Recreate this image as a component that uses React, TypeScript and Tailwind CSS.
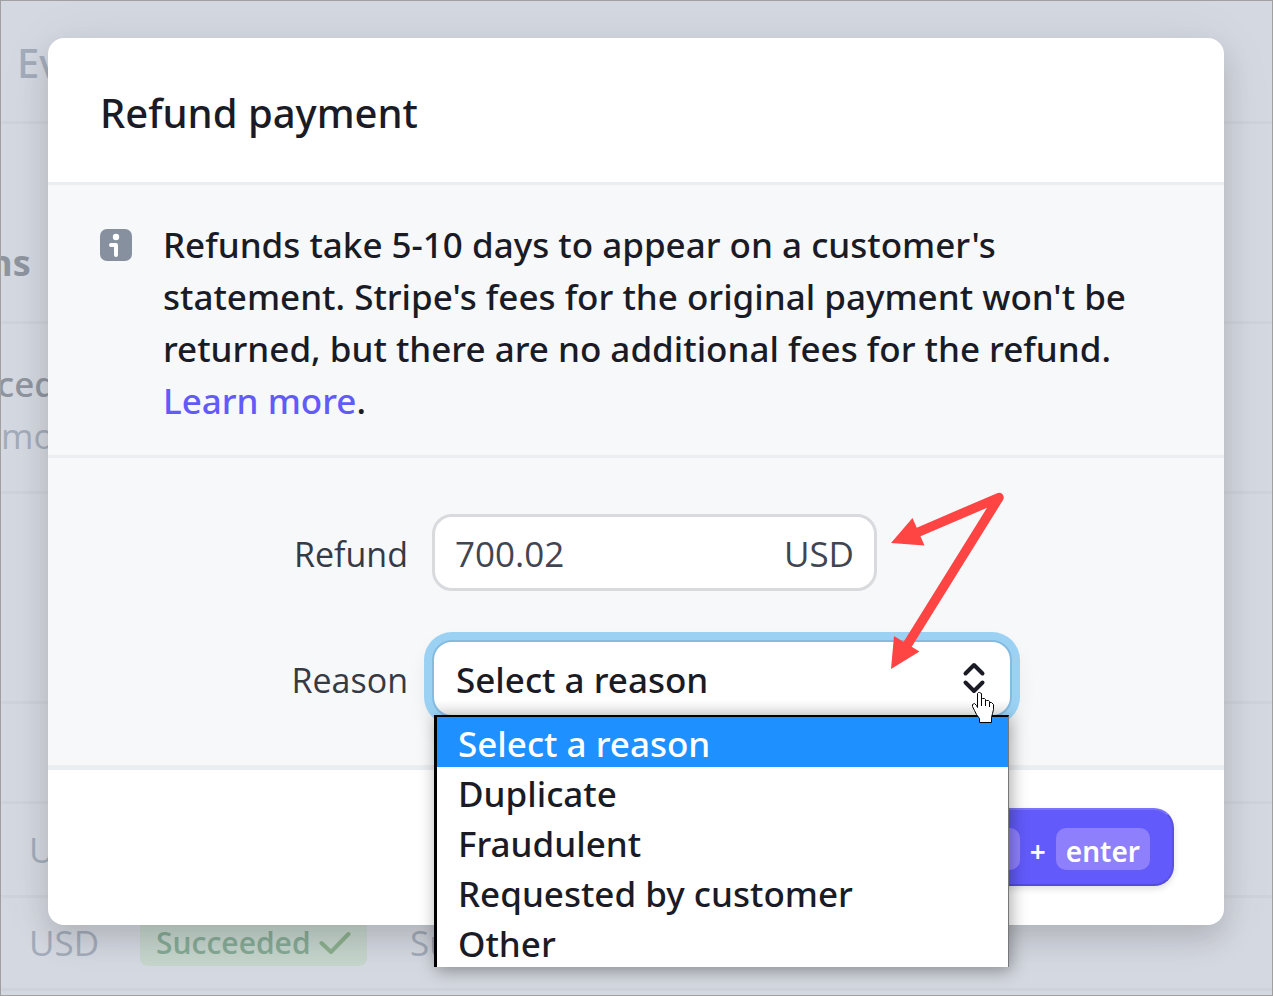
import { useState } from "react";

const reasons = [
  "Select a reason",
  "Duplicate",
  "Fraudulent",
  "Requested by customer",
  "Other",
];

function PageBehind() {
  return (
    <div aria-hidden="true" className="flex flex-col text-[35px] leading-[52px] text-[#a3acba]">
      <div className="flex h-[123px] items-center border-b-[3px] border-[#ced2db] pt-1 pl-4 font-['Noto_Sans',sans-serif] text-[40px] font-medium">
        Ev
      </div>
      <div className="flex h-[200px] items-end border-b-[3px] border-[#ced2db] pb-8 text-[36px] font-bold text-[#8f959f]">
        <span className="-ml-3">ns</span>
      </div>
      <div className="flex h-[170px] flex-col justify-center border-b-[3px] border-[#ced2db] pt-1">
        <span className="-ml-1 font-['Noto_Sans',sans-serif] font-medium text-[#8f959f]">ced</span>
        <span>mo</span>
      </div>
      <div className="h-[210px] border-b-[3px] border-[#ced2db]" />
      <div className="h-[100px] border-b-[3px] border-[#ced2db]" />
      <div className="flex h-[94px] items-center border-b-[3px] border-[#ced2db] pl-7">USD</div>
      <div className="flex h-[93px] items-center border-b-[3px] border-[#ced2db] pl-7">
        <span className="w-[111px]">USD</span>
        <span className="flex h-[46px] w-[227px] items-center gap-2 rounded-lg bg-[#c5d5cc] pl-4 text-[30px] font-semibold text-[#86ab96]">
          Succeeded
          <svg className="h-6 w-8" viewBox="0 0 32 24" fill="none" stroke="#8db08f" strokeWidth="4" strokeLinecap="round" strokeLinejoin="round">
            <path d="M2.5 12 L12 21 L29.500 3" />
          </svg>
        </span>
        <span className="pl-[43px]">Su</span>
      </div>
    </div>
  );
}

function InfoIcon() {
  return (
    <svg className="mt-[10px] h-8 w-8 shrink-0" viewBox="0 0 32 32" aria-hidden="true">
      <rect width="32" height="32" rx="7" fill="#87909f" />
      <circle cx="16" cy="8" r="3.200" fill="#fff" />
      <path d="M11 16 H16 V26" fill="none" stroke="#fff" strokeWidth="4" strokeLinecap="round" strokeLinejoin="round" />
    </svg>
  );
}

function Arrows() {
  return (
    <svg className="pointer-events-none absolute top-[31px] left-[840px] h-[184px] w-[120px]" viewBox="888 489 120 184" aria-hidden="true">
      <path d="M914 534 L999 497.500 L906 647" fill="none" stroke="#ff4444" strokeWidth="9.500" strokeLinecap="round" strokeLinejoin="round" />
      <path d="M891 543 L912.500 518 L924.500 545.500 Z M891 669 L894 636 L919.500 651.500 Z" fill="#ff4444" />
    </svg>
  );
}

function HandPointer() {
  return (
    <svg className="pointer-events-none absolute top-[51px] right-[17px] z-20 h-8 w-6" viewBox="971 691 24 32" aria-hidden="true">
      <path
        d="M979.500 722.500 V718.500 L976.500 714.500 L974.500 710.500 L972.500 706.500 V704.500 L974.500 703.500 L976.500 705.500 L977.500 707.500 V693.500 L978.500 692.500 H979.500 L981.500 693.500 V699 L982.500 698.500 H984.500 L985.500 699.500 V701 L986.500 700.500 H988.500 L989.500 701.500 V702.500 L991.500 702.500 L993.500 704.500 V709.500 L992.500 713.500 L991.500 717.500 V722.500 Z"
        fill="#fff"
        stroke="#000"
        strokeWidth="1"
        strokeLinejoin="round"
      />
      <path d="M981.500 699 V706 M985.500 700 V706 M989.500 702 V707" stroke="#000" strokeWidth="1" />
    </svg>
  );
}

export default function App() {
  const [reason, setReason] = useState(reasons[0]);
  const [amount, setAmount] = useState("700.02");

  return (
    <main className="relative min-h-screen overflow-hidden border border-[#a0a0a0] bg-[#d4d8e0] font-['Open_Sans','Noto_Sans',sans-serif] text-[#1a1b25]">
      <PageBehind />
      <div className="absolute inset-0 pt-[37px] pr-12 pl-[47px]">
        <section
          role="dialog"
          aria-labelledby="refund-title"
          className="rounded-2xl bg-white shadow-[0_14px_28px_rgba(0,0,0,0.14),0_4px_60px_rgba(48,49,61,0.06)]"
        >
          <header className="flex h-[147px] items-center border-b-[3px] border-[#ebeef1] px-[52px] pt-[6px]">
            <h1 id="refund-title" className="font-['Noto_Sans',sans-serif] text-[40px] font-medium">Refund payment</h1>
          </header>

          <div className="flex gap-[31px] border-b-[3px] border-[#ebedf0] bg-[#f6f8fa] px-[52px] pt-[34px] pb-7">
            <InfoIcon />
            <p className="max-w-[980px] font-['Noto_Sans',sans-serif] text-[35px] leading-[52px] font-medium">
              Refunds take 5-10 days to appear on a customer's statement. Stripe's fees for the original payment won't be
              returned, but there are no additional fees for the refund.{" "}
              <a href="#learn-more" className="text-[#625afa]">Learn more</a>.
            </p>
          </div>

          <form className="relative flex flex-col gap-[49px] border-b-[5px] border-[#ebeef1] bg-[#f6f8fa] pt-14 pb-12">
            <div className="flex items-center gap-6">
              <label htmlFor="amount" className="w-[360px] pt-1 text-right text-[34px] text-[#353a44]">Refund</label>
              <div className="flex h-[77px] w-[445px] items-center rounded-[20px] border-[3px] border-[#d8dade] bg-white px-5 pt-1 text-[35px] text-[#414552]">
                <input
                  id="amount"
                  value={amount}
                  onChange={(e) => setAmount(e.target.value)}
                  className="w-full min-w-0 flex-1 bg-transparent outline-none"
                />
                <span>USD</span>
              </div>
            </div>

            <div className="flex items-center gap-6">
              <label htmlFor="reason" className="w-[360px] pt-1 text-right text-[34px] text-[#353a44]">Reason</label>
              <div className="relative w-[580px]">
                <select
                  id="reason"
                  value={reason}
                  onChange={(e) => setReason(e.target.value)}
                  className="block h-[77px] w-full appearance-none rounded-[20px] border-2 border-[#86bbe0] bg-white bg-linear-to-b from-white from-80% to-[#ececec] px-[22px] pt-1 font-['Noto_Sans',sans-serif] text-[35px] font-medium shadow-[0_0_0_8px_#9bd2f4,0_10px_24px_rgba(0,0,0,0.12)] outline-none"
                >
                  {reasons.map((r) => (
                    <option key={r}>{r}</option>
                  ))}
                </select>
                <svg className="pointer-events-none absolute top-[22px] right-[26px] h-8 w-6" viewBox="0 0 24 32" fill="none" stroke="#1a1b25" strokeWidth="4" strokeLinecap="round" strokeLinejoin="round" aria-hidden="true">
                  <path d="M3.500 11.500 L12 3 L20.500 11.500 M3.500 20.500 L12 29 L20.500 20.500" />
                </svg>
                <HandPointer />
                <ul
                  role="listbox"
                  aria-label="Reason"
                  className="absolute top-[75px] left-[2px] z-10 w-[575px] border-t-2 border-r border-l-[3px] border-t-black border-r-[#777] border-l-black bg-white font-['Noto_Sans',sans-serif] text-[35px] font-medium shadow-[2px_4px_16px_rgba(0,0,0,0.35)]"
                >
                  {reasons.map((r) => (
                    <li
                      key={r}
                      role="option"
                      aria-selected={r === reason}
                      onClick={() => setReason(r)}
                      className="flex h-[50px] items-center pt-1 pl-[21px] aria-selected:bg-[#1e90ff] aria-selected:text-white"
                    >
                      {r}
                    </li>
                  ))}
                </ul>
              </div>
            </div>
            <Arrows />
          </form>

          <footer className="flex h-[155px] items-center justify-end pr-[50px] pb-[2px]">
            <button
              type="submit"
              className="flex h-[78px] items-center gap-[10px] rounded-[20px] border-2 border-t-[#7a73fb] border-r-[#5a52e6] border-b-[#544bdc] border-l-[#5a52e6] bg-[#625afa] px-[22px] pt-1 font-['Noto_Sans',sans-serif] text-[28px] font-semibold text-white shadow-[0_3px_6px_rgba(0,0,0,0.12)]"
            >
              <kbd className="flex h-[42px] items-center rounded-[10px] bg-[#8e80fc] px-[10px] pt-1 font-[inherit]">ctrl</kbd>
              <span className="pt-1">+</span>
              <kbd className="flex h-[42px] items-center rounded-[10px] bg-[#8e80fc] px-[10px] pt-1 font-[inherit]">enter</kbd>
            </button>
          </footer>
        </section>
      </div>
    </main>
  );
}
